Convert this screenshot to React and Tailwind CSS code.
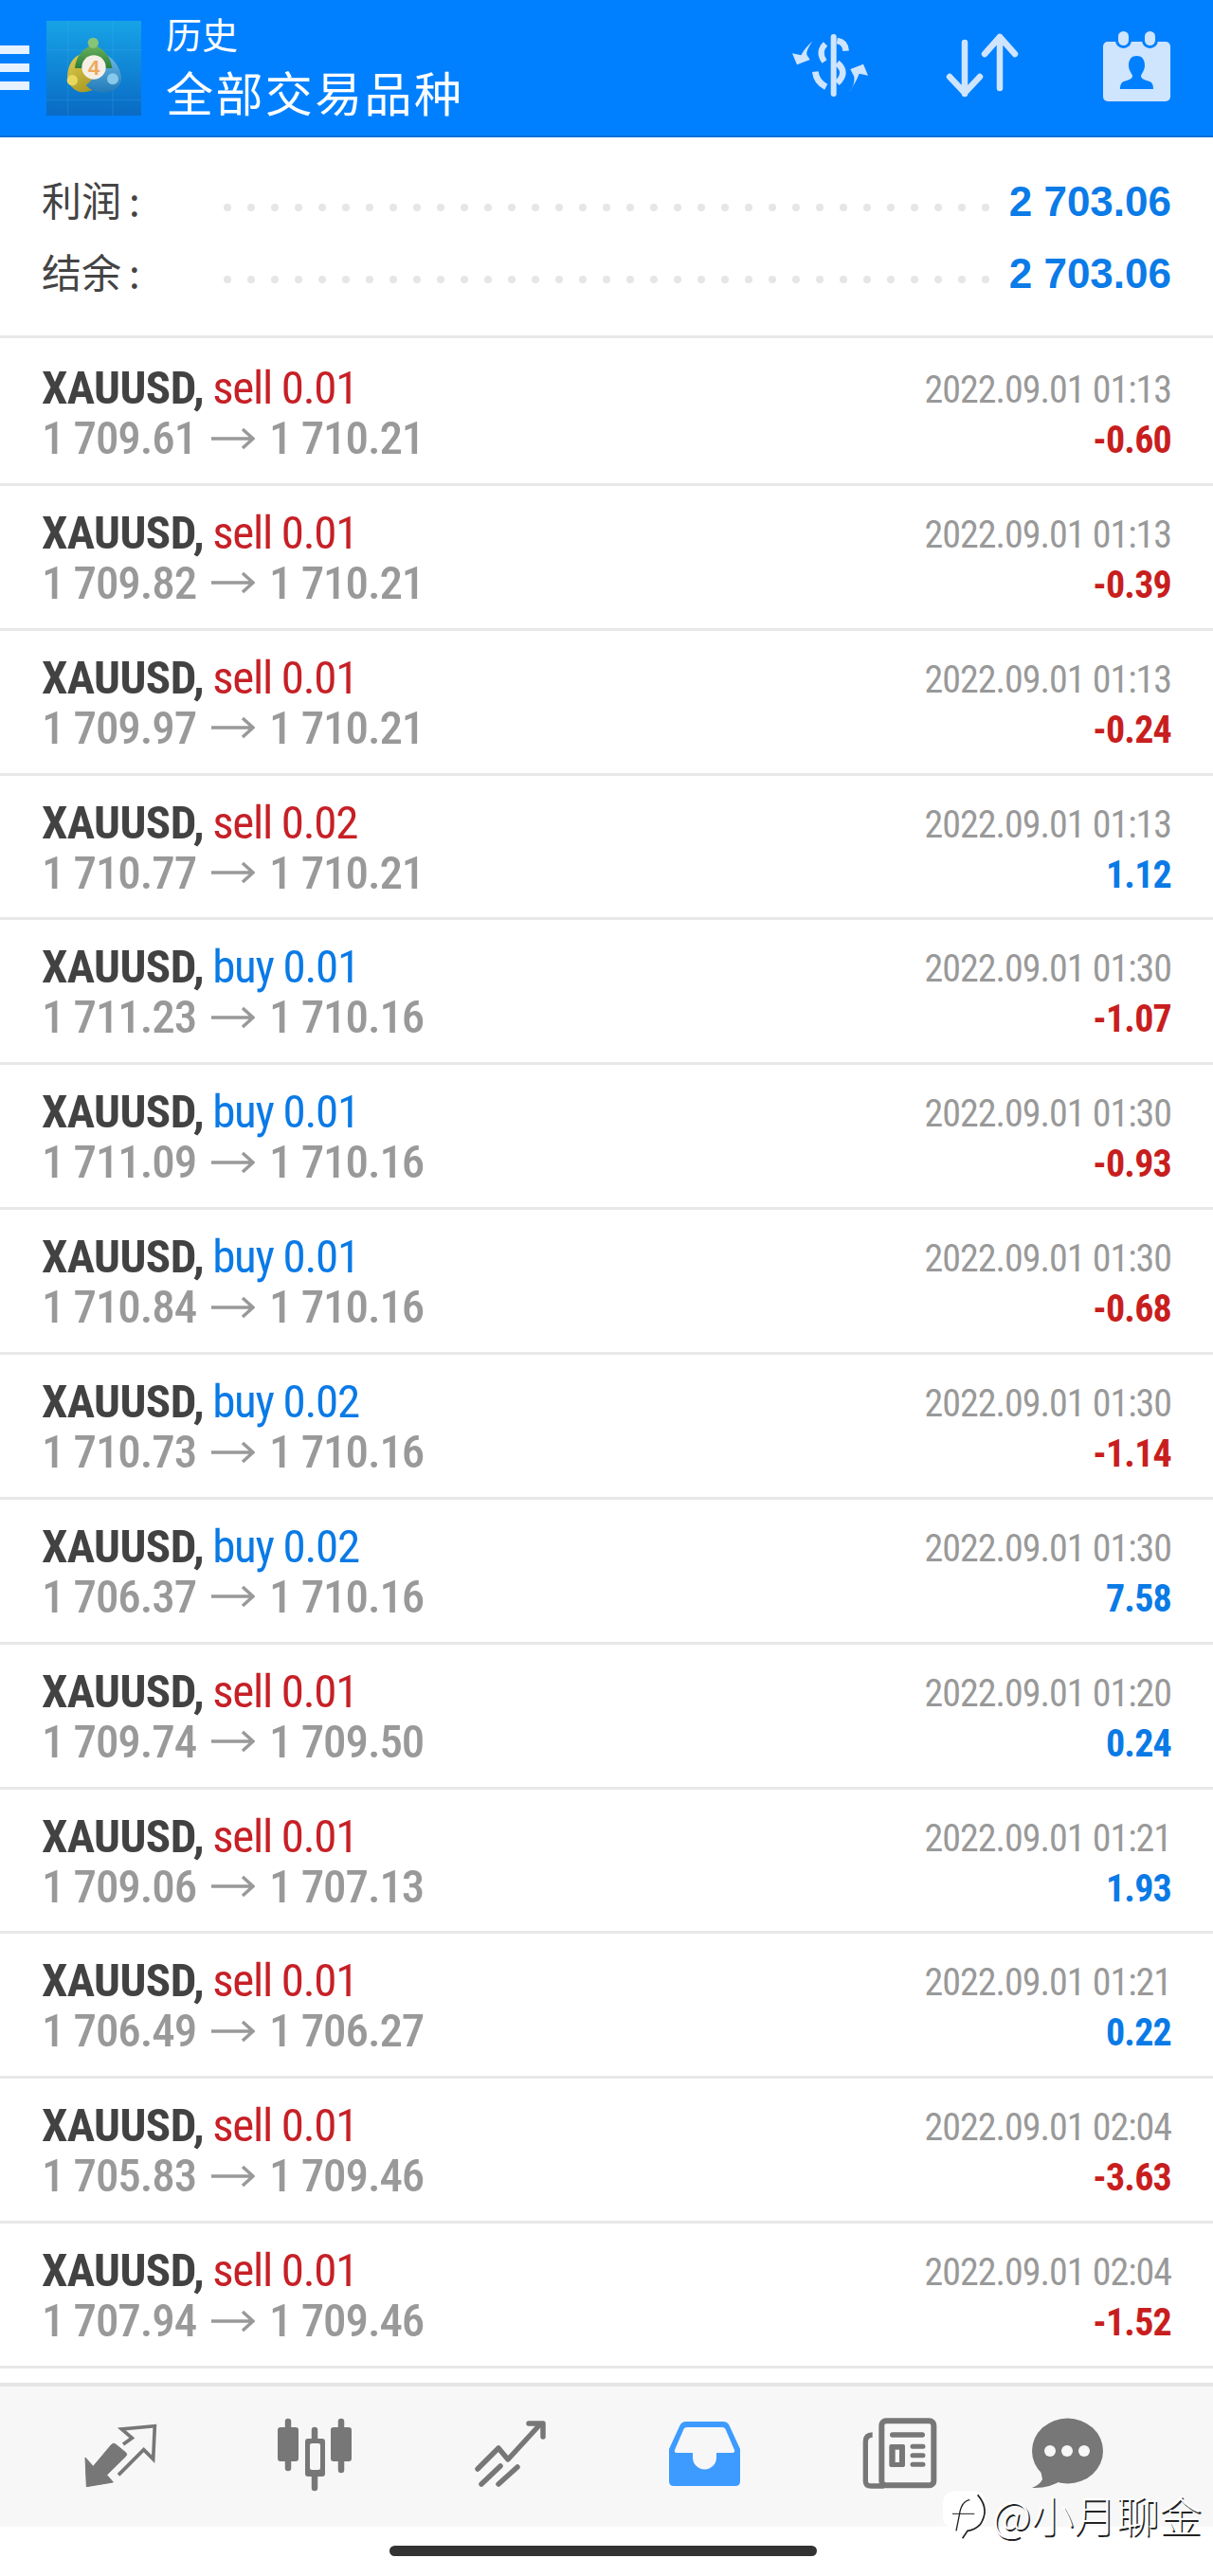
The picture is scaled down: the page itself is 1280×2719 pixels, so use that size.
import React from "react";

const rows = [
  ["sell 0.01", "1 709.61", "1 710.21", "2022.09.01 01:13", "-0.60"],
  ["sell 0.01", "1 709.82", "1 710.21", "2022.09.01 01:13", "-0.39"],
  ["sell 0.01", "1 709.97", "1 710.21", "2022.09.01 01:13", "-0.24"],
  ["sell 0.02", "1 710.77", "1 710.21", "2022.09.01 01:13", "1.12"],
  ["buy 0.01", "1 711.23", "1 710.16", "2022.09.01 01:30", "-1.07"],
  ["buy 0.01", "1 711.09", "1 710.16", "2022.09.01 01:30", "-0.93"],
  ["buy 0.01", "1 710.84", "1 710.16", "2022.09.01 01:30", "-0.68"],
  ["buy 0.02", "1 710.73", "1 710.16", "2022.09.01 01:30", "-1.14"],
  ["buy 0.02", "1 706.37", "1 710.16", "2022.09.01 01:30", "7.58"],
  ["sell 0.01", "1 709.74", "1 709.50", "2022.09.01 01:20", "0.24"],
  ["sell 0.01", "1 709.06", "1 707.13", "2022.09.01 01:21", "1.93"],
  ["sell 0.01", "1 706.49", "1 706.27", "2022.09.01 01:21", "0.22"],
  ["sell 0.01", "1 705.83", "1 709.46", "2022.09.01 02:04", "-3.63"],
  ["sell 0.01", "1 707.94", "1 709.46", "2022.09.01 02:04", "-1.52"],
];

function Row({ r }) {
  const sell = r[0].startsWith("sell");
  const neg = r[4].startsWith("-");
  return (
    <div className="h-[152.87px] border-b-[3px] border-[#e8e8e8] px-[44px] flex justify-between font-['Roboto',sans-serif] font-stretch-condensed">
      <div className="flex flex-col pt-[23px]">
        <div className="flex gap-[9px] text-[49px] leading-[53px] whitespace-nowrap">
          <span className="font-bold text-[#424242] tracking-[-0.6px]">XAUUSD,</span>
          <span className={"tracking-[-1.3px] " + (sell ? "text-[#c62026]" : "text-[#0a7ae6]")}>{r[0]}</span>
        </div>
        <div className="flex items-center text-[49px] leading-[53px] whitespace-nowrap font-medium text-[#999999] tracking-[-1.1px]">
          <span>{r[1]}</span>
          <svg className="ml-[16px] mr-[15px] w-[46px] h-[24px]" viewBox="0 0 46 24" fill="none" stroke="#999999" strokeWidth="3.5">
            <path d="M0 12H43M33 2L44 12L33 22" />
          </svg>
          <span>{r[2]}</span>
        </div>
      </div>
      <div className="flex flex-col items-end pt-[26px]">
        <div className="text-[40px] leading-[52px] whitespace-nowrap text-[#999999] tracking-[-1px]">{r[3]}</div>
        <div className={"text-[40px] leading-[53px] whitespace-nowrap font-bold tracking-[-0.8px] " + (neg ? "text-[#c81e1e]" : "text-[#0a7ae6]")}>{r[4]}</div>
      </div>
    </div>
  );
}

function Logo() {
  return (
    <svg className="ml-[18px] w-[100px] h-[100px] shrink-0" viewBox="0 0 300 300">
      <defs>
        <linearGradient id="lg" x1="0" y1="0" x2="0" y2="1">
          <stop offset="0" stopColor="#17a3e6" />
          <stop offset="1" stopColor="#0a6ac4" />
        </linearGradient>
        <linearGradient id="gy" x1="0" y1="0" x2="0.6" y2="1">
          <stop offset="0" stopColor="#e3cf52" />
          <stop offset="1" stopColor="#a89a24" />
        </linearGradient>
        <linearGradient id="gb" x1="0" y1="0" x2="0" y2="1">
          <stop offset="0" stopColor="#6fbbe6" />
          <stop offset="1" stopColor="#2179b8" />
        </linearGradient>
        <linearGradient id="gg" x1="0" y1="0" x2="0" y2="1">
          <stop offset="0" stopColor="#6cb35f" />
          <stop offset="1" stopColor="#2b7f3b" />
        </linearGradient>
      </defs>
      <rect width="300" height="300" fill="url(#lg)" />
      <path d="M0 92H300M0 250H300M68 0V300M210 0V300" stroke="#4db4ee" strokeWidth="1.5" opacity="0.5" />
      <path d="M110 105Q70 120 66 175Q70 215 105 225Q140 230 170 205L130 160Z" fill="url(#gy)" />
      <path d="M185 105Q232 130 238 185Q230 220 190 228Q150 230 125 205L170 160Z" fill="url(#gb)" />
      <path d="M90 150Q95 95 148 75Q200 95 208 150L150 150Z" fill="url(#gg)" />
      <circle cx="148" cy="70" r="17" fill="#86c477" />
      <circle cx="82" cy="188" r="17" fill="#e8d95e" />
      <circle cx="210" cy="184" r="18" fill="#86c9ea" />
      <circle cx="150" cy="147" r="38" fill="#f5efe6" />
      <text x="150" y="171" textAnchor="middle" fontSize="66" fontWeight="700" fill="#eda85a" fontFamily="'Liberation Sans',sans-serif">4</text>
    </svg>
  );
}

function DollarIcon() {
  return (
    <svg className="w-[100px] h-[90px]" viewBox="0 0 300 270" fill="none" stroke="#cfe4fd" strokeLinecap="round">
      <path d="M161 48V228" strokeWidth="18" />
      <path d="M172 60Q198 64 200 92" strokeWidth="20" strokeLinecap="butt" />
      <path d="M135 70Q110 95 132 126" strokeWidth="18" strokeLinecap="butt" />
      <path d="M103 158Q106 190 137 206" strokeWidth="20" strokeLinecap="butt" />
      <path d="M172 130Q208 160 172 194" strokeWidth="20" strokeLinecap="butt" />
      <path d="M30 100L58 106Q70 82 94 62Q72 92 76 104L86 120L45 136Z" fill="#cfe4fd" stroke="none" />
      <path d="M270 170L242 164Q232 192 208 224Q230 200 226 174L214 150L255 134Z" fill="#cfe4fd" stroke="none" />
    </svg>
  );
}

function SwapIcon() {
  return (
    <svg className="w-[80px] h-[70px]" viewBox="0 0 80 70" fill="none" stroke="#cfe4fd" strokeWidth="6.5" strokeLinecap="round" strokeLinejoin="round">
      <path d="M21 12V66M5 48L21 65L37 48" />
      <path d="M58 6V60M42 24L58 6L74 24" />
    </svg>
  );
}

function CalendarIcon() {
  return (
    <svg className="w-[71px] h-[74px]" viewBox="0 0 71 74">
      <rect x="0" y="11" width="71" height="63" rx="5" fill="#cfe4fd" />
      <rect x="13" y="-1" width="17" height="19" rx="8.5" fill="#0080ff" />
      <rect x="41" y="-1" width="17" height="19" rx="8.5" fill="#0080ff" />
      <rect x="16" y="0" width="11" height="15" rx="5.5" fill="#cfe4fd" />
      <rect x="44" y="0" width="11" height="15" rx="5.5" fill="#cfe4fd" />
      <path d="M35.5 26C29 26 27 31 27 36C27 41 30 44 31 47C31 50 28 51 22 53C19 54 18 57 18 61H53C53 57 52 54 49 53C43 51 40 50 40 47C41 44 44 41 44 36C44 31 42 26 35.5 26Z" fill="#0080ff" />
    </svg>
  );
}

function NavArrows() {
  return (
    <svg className="ml-[80px] w-[100px] h-[90px] shrink-0" viewBox="0 0 300 270">
      <path d="M30 150L55 178L112 110Q118 102 126 108L158 134Q164 140 158 146L98 205L118 228L34 242Z" fill="#777777" stroke="#777777" strokeWidth="3" strokeLinejoin="round" />
      <path d="M135 205L215 125L245 155L250 50L145 60L178 88L150 108" fill="none" stroke="#777777" strokeWidth="11" />
    </svg>
  );
}

function Candles() {
  return (
    <svg className="ml-[108px] w-[90px] h-[90px] shrink-0" viewBox="288 2545 90 90">
      <g stroke="#777777" strokeWidth="6.5" strokeLinecap="round" fill="none">
        <path d="M304 2557V2606M332 2566V2627M360 2557V2608" />
      </g>
      <rect x="293" y="2563" width="22" height="36" rx="3" fill="#777777" />
      <rect x="349" y="2563" width="22" height="36" rx="3" fill="#777777" />
      <rect x="322" y="2575" width="21" height="40" rx="3" fill="#777777" />
      <rect x="327" y="2580" width="11" height="28" rx="2" fill="#f7f7f7" />
    </svg>
  );
}

function Trend() {
  return (
    <svg className="ml-[118px] w-[90px] h-[90px] shrink-0" viewBox="496 2545 90 90" fill="none" stroke="#777777" strokeWidth="5.5" strokeLinecap="round" strokeLinejoin="round">
      <path d="M504 2607L526 2585L536 2597L569 2561" />
      <path d="M558 2559H573V2573" />
      <path d="M528 2604L508 2623M546 2605L526 2623" />
    </svg>
  );
}

function Inbox() {
  return (
    <svg className="ml-[113px] w-[90px] h-[90px] shrink-0" viewBox="699 2545 90 90">
      <path d="M724 2557H763Q768 2557 770 2562L781 2586V2620Q781 2625 776 2625H711Q706 2625 706 2620V2586L717 2562Q719 2557 724 2557Z" fill="#3d9bff" />
      <path d="M725 2563H762Q765 2563 766 2566L775 2587Q776 2590 773 2590H756V2595A12.5 12.5 0 0 1 731 2595V2590H714Q711 2590 712 2587L721 2566Q722 2563 725 2563Z" fill="#f7f7f7" />
    </svg>
  );
}

function News() {
  return (
    <svg className="ml-[111px] w-[100px] h-[90px] shrink-0" viewBox="0 0 300 270" fill="none" stroke="#777777">
      <rect x="91" y="34" width="165" height="204" rx="14" strokeWidth="18" fill="#f7f7f7" />
      <path d="M62 78Q40 78 40 100V225Q40 240 58 240H100" strokeWidth="16" />
      <path d="M125 78H220" strokeWidth="16" strokeLinecap="round" />
      <rect x="115" y="108" width="50" height="72" rx="6" fill="#777777" stroke="none" />
      <rect x="134" y="125" width="13" height="40" fill="#f7f7f7" stroke="none" />
      <path d="M189 115H222M189 143H222M189 172H222" strokeWidth="15" strokeLinecap="round" />
    </svg>
  );
}

function Chat() {
  return (
    <svg className="ml-[81px] w-[90px] h-[90px] shrink-0" viewBox="1081 2545 90 90">
      <ellipse cx="1126.5" cy="2588" rx="37.5" ry="34.5" fill="#777777" />
      <path d="M1098 2608L1100 2618Q1097 2624 1089 2627Q1107 2628 1122 2618Z" fill="#777777" />
      <circle cx="1108" cy="2588" r="6" fill="#f7f7f7" />
      <circle cx="1126" cy="2588" r="6" fill="#f7f7f7" />
      <circle cx="1144" cy="2588" r="6" fill="#f7f7f7" />
    </svg>
  );
}

function Dots() {
  return (
    <div className="flex gap-[17px] mt-[16px] ml-[89px]">
      {Array.from({ length: 33 }).map((_, i) => (
        <div key={i} className="w-[8px] h-[8px] rounded-full bg-[#e6e6e6]" />
      ))}
    </div>
  );
}

function SummaryRow({ label }) {
  return (
    <div className="h-[76px] pl-[44px] pr-[44px] flex items-center justify-between">
      <div className="flex items-center">
        <div className="w-[103px] -mt-[2px] text-[42px] leading-[76px] text-[#444444] font-['Noto_Sans_CJK_SC',sans-serif] whitespace-nowrap">
          {label}<span className="ml-[8px]">:</span>
        </div>
        <Dots />
      </div>
      <div className="mt-[3px] text-[44px] leading-[76px] font-bold text-[#0b7be8] font-['Liberation_Sans',sans-serif] whitespace-nowrap">2 703.06</div>
    </div>
  );
}

export default function App() {
  return (
    <div className="relative w-[1280px] h-[2719px] bg-white overflow-hidden">
      <div className="h-[145px] bg-[#0080ff] border-b-[2px] border-[#0a6fd6] flex items-center">
        <div className="w-[31px] flex flex-col gap-[10px] shrink-0">
          <div className="h-[9px] bg-[#e6f2ff]" />
          <div className="h-[9px] bg-[#e6f2ff]" />
          <div className="h-[9px] bg-[#e6f2ff]" />
        </div>
        <Logo />
        <div className="ml-[26px] flex flex-col text-white font-['Noto_Sans_CJK_SC',sans-serif]">
          <div className="text-[38px] leading-[56px] -mt-[8px]">历史</div>
          <div className="text-[50px] leading-[66px] tracking-[2.4px]">全部交易品种</div>
        </div>
        <div className="ml-auto flex items-center">
          <div className="mr-[71px] -mt-[8px]"><DollarIcon /></div>
          <div className="mr-[87px] -mt-[8px]"><SwapIcon /></div>
          <div className="mr-[45px] -mt-[4px]"><CalendarIcon /></div>
        </div>
      </div>
      <div className="h-[211.5px] pt-[28px] border-b-[3px] border-[#e8e8e8]">
        <SummaryRow label="利润" />
        <SummaryRow label="结余" />
      </div>
      <div className="pt-[3.5px]">
        {rows.map((r, i) => <Row key={i} r={r} />)}
      </div>
      <div className="mt-[15px] h-[152px] border-t-[4px] border-[#e5e5e5] bg-[#f7f7f7] flex items-start pt-[25px]">
        <NavArrows />
        <Candles />
        <Trend />
        <Inbox />
        <News />
        <Chat />
      </div>
      <div className="absolute left-[411px] top-[2687px] w-[451px] h-[11px] rounded-full bg-[#333333]" />
      <div className="absolute left-[995px] top-[2628px] flex items-center">
        <svg className="w-[50px] h-[52px] shrink-0" viewBox="0 0 150 156" fill="none">
          <rect x="0" y="4" width="135" height="120" rx="38" fill="#ffffff" />
          <path d="M85 32Q58 36 52 80L42 130" stroke="#222222" strokeWidth="4" />
          <path d="M30 76H100" stroke="#222222" strokeWidth="3" />
          <path d="M110 16Q150 62 118 110Q100 128 78 130L62 154" stroke="#222222" strokeWidth="5" />
        </svg>
        <div className="ml-[2px] text-[45px] leading-[50px] text-white font-light font-['Noto_Sans_CJK_SC',sans-serif] whitespace-nowrap [text-shadow:1.5px_1.5px_0_#222222]">@小月聊金</div>
      </div>
    </div>
  );
}
